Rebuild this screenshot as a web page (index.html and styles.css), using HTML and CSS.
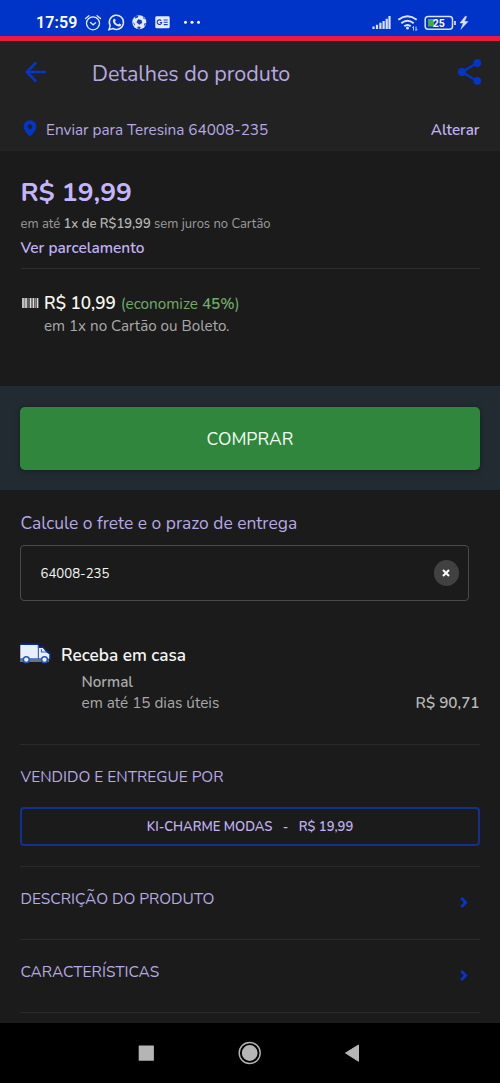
FILE: index.html
```html
<!DOCTYPE html>
<html lang="pt-BR">
<head>
<meta charset="utf-8">
<title>Detalhes do produto</title>
<link rel="stylesheet" href="styles.css">
</head>
<body>
<div class="screen">
  <div class="status">
    <span class="clock">17:59</span>
    <svg class="status-left" width="120" height="20" viewBox="84 12 120 20" fill="none" stroke="#e4eaff" stroke-width="1.3" stroke-linecap="round">
      <circle cx="93" cy="23.300" r="6.500"/><path d="M90.500 22.500l2.600 2.300 2.500-2M85.500 18.600l3.400-2.900M100.500 18.600l-3.400-2.900"/>
      <path d="M109 29.600l1.200-3.800a7.100 7.100 0 1 1 2.700 2.700z" stroke-width="1.500"/>
      <path d="M113.700 19.100c.9-.9 1.400-.4 2.100 1.400l-.8 1.200c.8 1.500 1.800 2.300 3.200 2.800l1-1.100 2.100 1.100c-.2 1.500-1.400 2.200-2.800 1.900-3.300-.8-5.800-3.400-5.600-6z" fill="#e4eaff" stroke="none"/>
      <circle cx="139.300" cy="22.300" r="7" fill="#e4eaff" stroke="none"/>
      <g fill="#173bc0" stroke="none"><path d="M138 19.200l3.500.7.7 3.200-3 1.700-2.700-2.500z"/><path d="M135 16.500l3.500-.8-.7 1.800-2.700.9zM142.500 16.300l2.800 3-1.500-.2zM133 22l1.800 2-.2 2zM144 23.700l2-.7-1.300 3.200zM137.700 26.600l3 .4-.8 2-2.600-.5z"/></g>
      <rect x="155.300" y="16.300" width="14.400" height="12" rx="1.400" fill="#e4eaff" stroke="none"/>
      <path d="M161.300 20.800a2.300 2.300 0 1 0 .4 1.700h-1.900M163.700 20h4M163.700 22.300h4M163.700 24.600h4" stroke="#173bc0" stroke-width="1.100" stroke-linecap="butt"/>
      <g fill="#fff" stroke="none"><circle cx="185.500" cy="22.300" r="1.500"/><circle cx="192" cy="22.300" r="1.500"/><circle cx="198.500" cy="22.300" r="1.500"/></g>
    </svg>
    <svg class="status-right" width="100" height="20" viewBox="370 12 100 20" fill="none" stroke="#dbe4ff">
      <path d="M373.500 29v-2.500M377 29v-4.200M380.400 29v-6.300M383.600 29v-8M386.700 29v-10.300M389.500 29v-13" stroke-width="2.200"/>
      <path d="M398.300 19.700q9.200-7 18.400 0M401.300 23.200q6.200-5 12.400 0M404.300 26.300q3.200-2.700 6.400 0" stroke-width="2"/>
      <circle cx="407.500" cy="28" r="1.500" fill="#dbe4ff" stroke="none"/>
      <path d="M413.500 26.500v4M412.400 27.800l1.100-1.300M416 26.500v4M416 30.500l1.200-1.300" stroke-width=".9"/>
      <rect x="425.200" y="16.500" width="27.300" height="12.800" rx="3" stroke-width="1.500"/>
      <rect x="428" y="19" width="6" height="7.500" fill="#43a94b" stroke="none"/>
      <path d="M455 21v4" stroke-width="1.700"/>
      <text class="battery" x="438.800" y="27" text-anchor="middle">25</text>
      <path d="M465.500 16l-5.500 7 3.300.1-2.500 6.200 7.200-7.700-3.600-.1 2.200-4.800z" fill="#dbe4ff" stroke="#dbe4ff" stroke-width=".5"/>
    </svg>
  </div>
  <header class="header">
    <div class="bar">
      <svg class="back" width="22" height="22" viewBox="0 0 22 22" fill="none" stroke="#0835c5" stroke-width="2.600"><path d="M20.800 11H2M11.200 1.500L1.800 11l9.400 9.500"/></svg>
      <h1 class="title">Detalhes do produto</h1>
      <svg class="share" width="24" height="26" viewBox="0 0 24 26" fill="#0335c9" stroke="#0335c9"><path d="M19.200 4L3.800 13l15.400 9" fill="none" stroke-width="2.200"/><g stroke="none"><circle cx="19.200" cy="4" r="3.900"/><circle cx="3.900" cy="13" r="3.900"/><circle cx="19.200" cy="21.800" r="3.900"/></g></svg>
    </div>
    <div class="ship">
      <svg width="14" height="17" viewBox="0 0 14 17"><path fill="#0335c9" fill-rule="evenodd" d="M7 .2a6.400 6.400 0 0 1 6.400 6.400C13.400 11 7 16.700 7 16.700S.6 11 .6 6.600A6.400 6.400 0 0 1 7 .2zm0 4a2.400 2.400 0 1 0 0 4.800 2.400 2.400 0 0 0 0-4.800z"/></svg>
      <span class="address">Enviar para Teresina 64008-235</span>
      <b class="change">Alterar</b>
    </div>
  </header>
  <section class="price-box">
    <div class="price">R$ 19,99</div>
    <div class="parcel">em até <b>1x de R$19,99</b> sem juros no Cartão</div>
    <div class="see">Ver parcelamento</div>
    <div class="offer">
      <svg width="17" height="10" viewBox="0 0 17 10" stroke="#ddd"><path d="M1 0v10M4 0v10M8.500 0v10M11.500 0v10M15.500 0v10" stroke-width="1.700"/><path d="M2.500 0v10M6 0v10M10 0v10M13.500 0v10" stroke="#888" stroke-width="1.200"/></svg>
      <b class="cash">R$ 10,99</b>
      <span class="save">(economize <b>45%</b>)</span>
    </div>
    <div class="terms">em 1x no Cartão ou Boleto.</div>
  </section>
  <div class="buy"><button class="buy-button">COMPRAR</button></div>
  <section class="freight">
    <h2 class="calc">Calcule o frete e o prazo de entrega</h2>
    <div class="zip">
      <span class="zip-value">64008-235</span>
      <span class="clear"><svg width="8" height="8" viewBox="0 0 8 8" stroke="#fff" stroke-width="2"><path d="M1 1l6 6M7 1L1 7"/></svg></span>
    </div>
    <div class="home">
      <svg width="31" height="21" viewBox="0 0 31 21"><path d="M.3 1h18v3.500h4.500l3.700 4.300 3.500 2.500v5.200H.3z" fill="#e8efff"/><path d="M0 1.200h18.600v3h4.800l3.300 4.500 3.300 2.200v5.400h-1.500" fill="none" stroke="#0a2b9c" stroke-width="1.500"/><path d="M18.400 3v13M26.500 9h-5V6.200M0 15.900h22" fill="none" stroke="#3b63c4" stroke-width="1.200"/><path d="M0 18h29" stroke="#b9c8f0" stroke-width="1"/><g fill="#edf3ff" stroke="#2453bd" stroke-width="1.500"><circle cx="6.300" cy="16.700" r="2.900"/><circle cx="24.500" cy="16.700" r="2.900"/></g></svg>
      <b class="home-title">Receba em casa</b>
    </div>
    <div class="normal">Normal</div>
    <div class="delivery"><span class="days">em até 15 dias úteis</span><b class="cost">R$ 90,71</b></div>
  </section>
  <section class="seller">
    <h3 class="sold">VENDIDO E ENTREGUE POR</h3>
    <div class="store">KI-CHARME MODAS &nbsp; - &nbsp; R$ 19,99</div>
  </section>
  <div class="row"><span class="description">DESCRIÇÃO DO PRODUTO</span><svg width="8" height="11" viewBox="0 0 8 11" fill="none" stroke="#0635c8" stroke-width="2.800"><path d="M1.300 1l4.300 4.500L1.300 10"/></svg></div>
  <div class="row"><span class="features">CARACTERÍSTICAS</span><svg width="8" height="11" viewBox="0 0 8 11" fill="none" stroke="#0635c8" stroke-width="2.800"><path d="M1.300 1l4.300 4.500L1.300 10"/></svg></div>
  <div class="end"></div>
  <nav class="nav">
    <svg width="240" height="24" viewBox="130 0 240 24" fill="#b5b5b5"><rect x="138.700" y="4.500" width="15.200" height="15.200" rx=".5"/><circle cx="249.700" cy="12" r="7.900"/><circle cx="249.700" cy="12" r="10.500" fill="none" stroke="#b5b5b5" stroke-width="1.400"/><path d="M345.500 12l13-8v16.300z" stroke="#b5b5b5" stroke-linejoin="round"/></svg>
  </nav>
</div>
</body>
</html>
```
FILE: styles.css
```css
* { box-sizing: border-box; }
body { margin: 0; background: #1b1b1b; }
svg { display: block; flex: none; }
h1, h2, h3 { margin: 0; font-weight: 400; }
b { font-weight: 650; }
.screen { width: 500px; height: 1083px; overflow: hidden; display: flex; flex-direction: column; font-family: Nunito, Lato, sans-serif; color: #a9a9a9; white-space: nowrap; }
.screen > * { flex: none; }
.status { height: 41px; padding: 12px 30px 0 36px; display: flex; background: #0033c7; border-bottom: 5px solid #e91c40; }
.clock { width: 48px; font: 600 16px/22px Roboto, sans-serif; letter-spacing: .1px; color: #fff; }
.status-right { margin-left: auto; }
.battery { font: 700 10.5px Roboto, sans-serif; fill: #fff; stroke: none; }
.header { height: 110px; background: #222; border-bottom: 1px solid #252525; color: #b6a8e0; }
.bar { height: 62px; display: flex; align-items: center; padding: 0 18px 0 25px; }
.title { flex: 1; margin-left: 45px; padding-top: 3px; font-size: 21.500px; line-height: 28px; }
.ship { height: 50px; display: flex; align-items: center; padding: 1px 20.500px 0 23px; }
.ship svg { margin-top: -1px; }
.address { flex: 1; margin-left: 9px; font-size: 15.300px; padding-top: 2px; }
.change { font-size: 15.200px; padding-top: 2px; color: #c0b1f1; }
.price-box { height: 235px; padding: 25px 20px 0 20.500px; }
.price { height: 36px; line-height: 33px; font-size: 26.500px; font-weight: 700; color: #c4b5fa; }
.parcel { height: 23px; line-height: 24px; font-size: 13px; color: #9c9c9c; }
.parcel b { color: #b5b5b5; font-weight: 600; }
.see { height: 34px; line-height: 26px; font-size: 15.400px; font-weight: 650; color: #c0b1f1; border-bottom: 1px solid #2d2d2d; }
.offer { height: 24px; margin-top: 22px; display: flex; align-items: center; line-height: 24px; padding-left: 1.500px; }
.offer svg { margin: -1px 0 0 -.5px; }
.cash { margin-left: 5.500px; padding-top: 1px; font-size: 17.200px; color: #faf8f0; }
.save { margin-left: 5px; font-size: 15.300px; color: #6fab69; padding-top: 1px; }
.terms { padding-left: 23.500px; line-height: 22px; font-size: 15.200px; }
.buy { height: 104px; padding: 21px 20px; background: #212b31; }
.buy-button { display: block; width: 460px; height: 63px; border: 0; padding: 1px 0 0; border-radius: 5px; background: #30863d; color: #f4fff5; font: 400 17.500px Nunito, Lato, sans-serif; box-shadow: 0 1px 4px #17211f; }
.freight { height: 255px; margin: 0 20px; border-bottom: 1px solid #2b2b2b; }
.calc { height: 55px; padding: 21px 0 0 .5px; line-height: 24px; font-size: 17.400px; color: #b6a8e0; }
.zip { width: 449px; height: 56px; display: flex; align-items: center; justify-content: space-between; border: 1px solid #4b4b4b; border-radius: 4px; padding: 0 9px 0 19.500px; }
.zip-value { color: #f5f5f5; font-size: 13.200px; padding-top: 1px; }
.clear { width: 25.500px; height: 25.500px; border-radius: 50%; background: #414141; display: flex; align-items: center; justify-content: center; }
.home { display: flex; height: 26px; margin-top: 42px; }
.home-title { margin-left: 10px; font-size: 17.200px; line-height: 25px; color: #f5f5f5; }
.normal { height: 22px; margin-left: 61.500px; line-height: 22px; padding-top: 2px; font-size: 15.200px; font-weight: 650; }
.delivery { display: flex; justify-content: space-between; padding: 0 .5px 0 61.500px; line-height: 24px; font-size: 15.300px; }
.cost { color: #b8b8b8; }
.seller { height: 122px; margin: 0 20px; border-bottom: 1px solid #2b2b2b; }
.sold { height: 62px; padding: 20px 0 0 .5px; line-height: 24px; font-size: 15.450px; color: #b6a8e0; }
.store { height: 39px; border: 2px solid #13308f; border-radius: 4px; text-align: center; line-height: 37px; font-size: 13.050px; font-weight: 650; color: #c0b1f1; }
.row { height: 73px; margin: 0 20px; padding: 20px 12px 0 .5px; display: flex; justify-content: space-between; line-height: 24px; font-size: 15.450px; color: #b6a8e0; border-bottom: 1px solid #2b2b2b; }
.row svg { margin-top: 10px; }
.end { height: 10px; }
.nav { height: 61px; padding: 18px 130px 0; background: #000; }
```
